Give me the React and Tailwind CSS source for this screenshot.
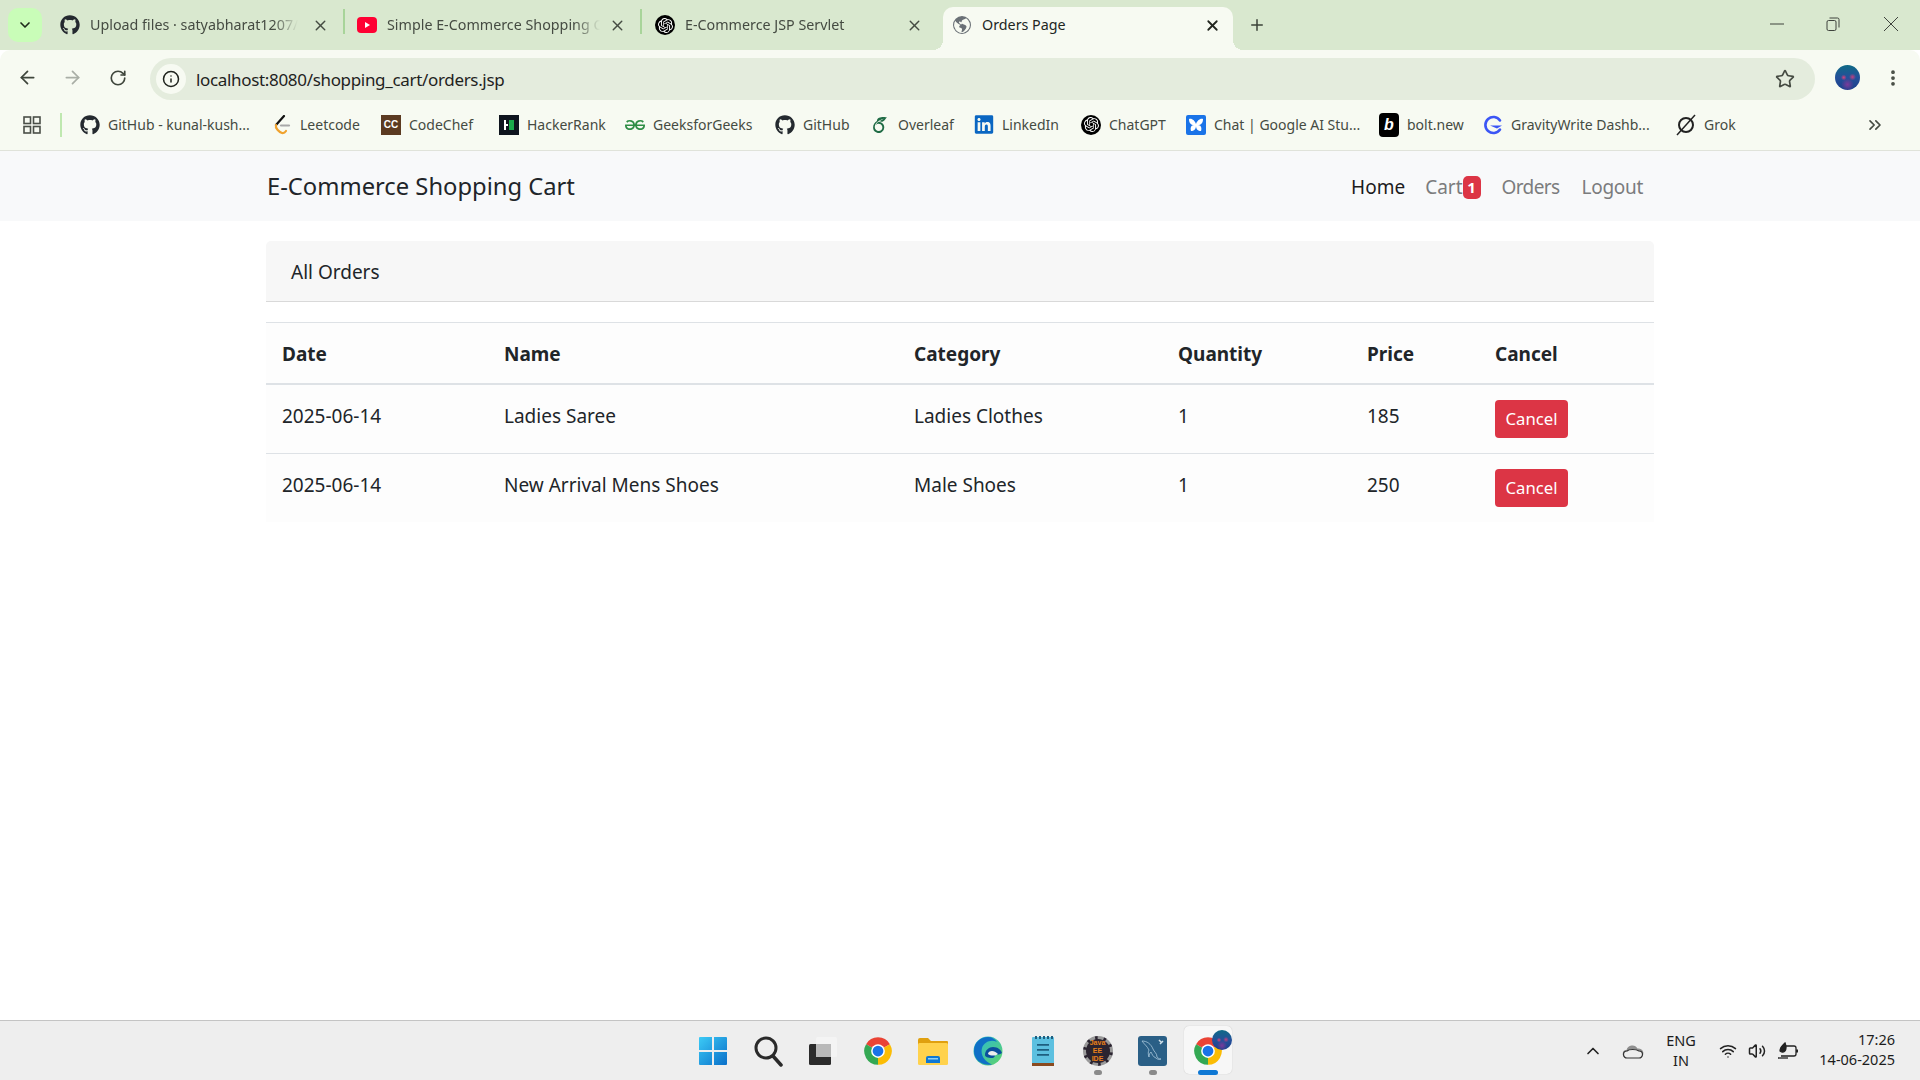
import {
  ArrowLeft,
  ArrowRight,
  ChevronDown,
  ChevronUp,
  ChevronsRight,
  EllipsisVertical,
  Info,
  Plus,
  RotateCw,
  Star,
  Volume2,
  Wifi,
  X,
} from "lucide-react";
import { BsGlobeAmericas } from "react-icons/bs";
import { FaGithub, FaLinkedin } from "react-icons/fa";
import { SiGeeksforgeeks, SiOpenai, SiOverleaf } from "react-icons/si";

const Youtube = () => (
  <svg width="20" height="20" viewBox="0 0 20 20">
    <rect x="0" y="2" width="20" height="16" rx="4" fill="#ff0033" />
    <path d="M8 7l5 3-5 3z" fill="#fff" />
  </svg>
);

const OpenAi = ({ size = 20 }) => (
  <span
    className="flex items-center justify-center rounded-full bg-black text-white"
    style={{ width: size, height: size }}
  >
    <SiOpenai size={size - 5} />
  </span>
);

const Leetcode = () => (
  <svg width="20" height="20" viewBox="0 0 20 20" fill="none">
    <path d="M12 1L4 10" stroke="#111" strokeWidth="2.2" strokeLinecap="round" />
    <path d="M4 10c-1 3 3 7 6 8 1.500.2 3-.5 4-2" stroke="#f0a22e" strokeWidth="2.2" strokeLinecap="round" />
    <path d="M9 10.500h8" stroke="#a8a8a8" strokeWidth="2.2" strokeLinecap="round" />
  </svg>
);

const CodeChef = () => (
  <span className="flex h-[20px] w-[20px] items-center justify-center bg-[#5b3a21] font-['Liberation_Sans',sans-serif] text-[10px] leading-none font-bold text-white">
    CC
  </span>
);

const HackerRank = () => (
  <svg width="20" height="20" viewBox="0 0 20 20">
    <rect width="20" height="20" fill="#0e141e" />
    <path d="M5 5h2v10H5zM7 9h2v2H7z" fill="#fff" />
    <rect x="10" y="5" width="5" height="10" fill="#1ba94c" />
  </svg>
);

const AiStudio = () => (
  <svg width="20" height="24" viewBox="0 0 20 24">
    <rect y="2" width="20" height="20" rx="2" fill="#1a73e8" />
    <path d="M3 6c3-1 6 2 7 5 1-3 4-6 7-5 0 4-2 6-5 6 3 0 4 3 3 6-3 0-5-2-5-5 0 3-2 5-5 5-1-3 0-6 3-6-3 0-5-2-5-6z" fill="#fff" />
  </svg>
);

const Bolt = () => (
  <span className="flex h-[24px] w-[20px] items-center justify-center rounded-[4px] bg-black font-['Liberation_Sans',sans-serif] text-[16px] font-bold text-white italic">
    b
  </span>
);

const Gravity = () => (
  <svg width="20" height="20" viewBox="0 0 20 20" fill="none">
    <path d="M17 5.500A8 8 0 1 0 17 14.500" stroke="#3b55f5" strokeWidth="2.600" strokeLinecap="round" />
    <path d="M7 10.500h12l-5 3z" fill="#3b55f5" />
  </svg>
);

const Grok = () => (
  <svg width="20" height="24" viewBox="0 0 20 24" fill="none">
    <circle cx="10" cy="12" r="7" stroke="#222" strokeWidth="2" />
    <path d="M1 22L19 2" stroke="#222" strokeWidth="1.500" />
  </svg>
);

const AppsGrid = () => (
  <svg width="20" height="20" viewBox="0 0 20 20" fill="none" stroke="#4a4f48" strokeWidth="1.600">
    <rect x="2" y="2" width="6.500" height="6.500" />
    <rect x="11.500" y="2" width="6.500" height="6.500" />
    <rect x="2" y="11.500" width="6.500" height="6.500" />
    <rect x="11.500" y="11.500" width="6.500" height="6.500" />
  </svg>
);

const Restore = () => (
  <svg width="14" height="14" viewBox="0 0 14 14" fill="none" stroke="#3f433d" strokeWidth="1">
    <rect x="1" y="3.500" width="9" height="10" rx="1.500" />
    <path d="M3.500 1h8a1.500 1.500 0 0 1 1.500 1.500v8" />
  </svg>
);

const Minimize = () => (
  <svg width="14" height="14" viewBox="0 0 14 14" stroke="#3f433d" strokeWidth="1">
    <path d="M0 7h14" />
  </svg>
);

const CloseThin = () => (
  <svg width="14" height="14" viewBox="0 0 14 14" stroke="#3f433d" strokeWidth="1">
    <path d="M0 0l14 14M14 0L0 14" />
  </svg>
);

const WindowsLogo = () => (
  <svg width="30" height="30" viewBox="0 0 30 30">
    <defs>
      <linearGradient id="win" x1="0" y1="0" x2="1" y2="1">
        <stop offset="0" stopColor="#3ccbf6" />
        <stop offset="1" stopColor="#0a6fc9" />
      </linearGradient>
    </defs>
    <path d="M1 2a1 1 0 0 1 1-1h12v13H1zM16 1h12a1 1 0 0 1 1 1v12H16zM1 16h13v13H2a1 1 0 0 1-1-1zM16 16h13v12a1 1 0 0 1-1 1H16z" fill="url(#win)" />
  </svg>
);

const SearchGlass = () => (
  <svg width="30" height="32" viewBox="0 0 30 32" fill="none" stroke="#2a2a2a">
    <circle cx="13" cy="13" r="10" strokeWidth="3" />
    <path d="M20 21l8 9" strokeWidth="3.500" strokeLinecap="round" />
  </svg>
);

const TaskView = () => (
  <svg width="30" height="30" viewBox="0 0 30 30">
    <rect x="1" y="8" width="22" height="21" rx="1.500" fill="#2b2b2b" />
    <rect x="8" y="1" width="21" height="20" rx="1.500" fill="#f4f4f4" opacity="0.85" />
    <rect x="8" y="8" width="15" height="13" fill="#b9b9b9" />
  </svg>
);

const Chrome = ({ size = 30 }) => (
  <svg width={size} height={size} viewBox="0 0 24 24">
    <path d="M12 12L2.470 6.500A11 11 0 0 1 21.530 6.500z" fill="#ea4335" />
    <path d="M12 12L21.530 6.500A11 11 0 0 1 12 23z" fill="#fbbc04" />
    <path d="M12 12L12 23A11 11 0 0 1 2.470 6.500z" fill="#34a853" />
    <circle cx="12" cy="12" r="5.500" fill="#fff" />
    <circle cx="12" cy="12" r="4.300" fill="#1a73e8" />
  </svg>
);

const Folder = () => (
  <svg width="32" height="30" viewBox="0 0 32 30">
    <path d="M1 4a2 2 0 0 1 2-2h8l3 3h16a1 1 0 0 1 1 1v3H1z" fill="#e0a00f" />
    <rect x="1" y="7" width="30" height="22" rx="1.500" fill="#ffd24d" />
    <path d="M9 27v-5a2 2 0 0 1 2-2h10a2 2 0 0 1 2 2v5z" fill="#0f78d4" />
    <rect x="11" y="22" width="10" height="1.500" fill="#8fd0f5" />
  </svg>
);

const Edge = () => (
  <svg width="30" height="30" viewBox="0 0 30 30">
    <defs>
      <linearGradient id="edgeA" x1="0" y1="0" x2="1" y2="1">
        <stop offset="0" stopColor="#27b8d8" />
        <stop offset="1" stopColor="#5fd36a" />
      </linearGradient>
    </defs>
    <circle cx="15" cy="15" r="14.500" fill="url(#edgeA)" />
    <path d="M1 15C1 6 8 1 15 1c4 0 7 2 9 5-6-3-13 0-15 6-2 7 3 14 10 16.500C9 30 1 24 1 15z" fill="#0f6fc6" />
    <path d="M12 19c0-5 4-8 8-8 5 0 8 3 9 6-3 2-5 2-8 1 2 2 0 4-2 4-4 0-7-1-7-3z" fill="#0b4f9e" />
    <path d="M15 18c0-2 2-3 4-3s4 1 6 3c-3 2-7 2-10 0z" fill="#eeeeee" />
  </svg>
);

const Notepad = () => (
  <svg width="24" height="32" viewBox="0 0 24 32">
    <rect x="1" y="2" width="22" height="29" rx="1" fill="#5cc0e0" />
    <rect x="1" y="28" width="22" height="3" fill="#8a4a1f" />
    <path d="M6 9h12v1.800H6zM6 14h12v1.800H6zM6 19h12v1.800H6z" fill="#1e5f80" />
    <path d="M4 1h2v3H4zM8 1h2v3H8zM12 1h2v3h-2zM16 1h2v3h-2zM20 1h2v3h-2z" fill="#1e5f80" />
  </svg>
);

const JavaEe = () => (
  <span className="flex h-[30px] w-[30px] items-center justify-center rounded-full border-[3px] border-dashed border-[#9a9a9a] bg-[#2b2430] text-center font-['Liberation_Sans',sans-serif] text-[7px] leading-[8px] font-bold text-[#e8801a]">
    Java EE
    <br />
    IDE
  </span>
);

const MysqlTile = () => (
  <svg width="29" height="30" viewBox="0 0 29 30" fill="none">
    <rect width="29" height="30" rx="3" fill="#2a5f86" />
    <path d="M4 5c5 0 9 3 11 8 1 3 4 4 4 8 1 1 2 2 4 2-2 1-4 0-5-1-3-1-4-4-5-6-1 1-2 2-2 5-1-3-1-5 0-7-2-4-5-6-7-9z" stroke="#a9c8dc" strokeWidth="0.800" />
    <path d="M21 4l3 3M22 8l3-3" stroke="#cfe0ea" strokeWidth="1.500" />
  </svg>
);

const Avatar = ({ className }) => (
  <span
    className={`block rounded-full bg-[radial-gradient(circle_at_35%_50%,#d9417a_0%,transparent_14%),radial-gradient(circle_at_70%_48%,#c2407f_0%,transparent_16%),radial-gradient(circle_at_50%_78%,#7a3a9a_0%,transparent_28%),linear-gradient(180deg,#0e6a86_0%,#24509a_50%,#1b3f8c_100%)] ${className}`}
  />
);

const Cloud = () => (
  <svg width="22" height="16" viewBox="0 0 22 16" fill="none">
    <path d="M5 15a4 4 0 0 1-.5-8 6 6 0 0 1 11-1.500 4.800 4.800 0 0 1 2 9.500z" fill="#8f8f8f" />
    <path d="M5 15a3.500 3.500 0 0 1 0-7c2-2 9-2 12 0a3.500 3.500 0 0 1 0 7z" fill="#eee" stroke="#333" strokeWidth="1.200" />
  </svg>
);

const Battery = () => (
  <svg width="22" height="18" viewBox="0 0 22 18" fill="none" stroke="#222" strokeWidth="1.300">
    <path d="M8 4h9a2 2 0 0 1 2 2v6a2 2 0 0 1-2 2H4" />
    <path d="M20 7.500v3" strokeWidth="2" />
    <path d="M3 9c0-4 3-6 5-8 1 3 2 5 0 8-1 1.500-3 1.500-5 0z" fill="#222" />
    <path d="M1 16h10" />
  </svg>
);

const tabs = [
  {
    icon: <FaGithub size={20} color="#24292f" />,
    title: "Upload files · satyabharat1207/S",
    tabClass: "w-[294px] pl-[10px]",
    titleClass: "w-[208px]",
    closeClass: "ml-[12px]",
    sep: true,
  },
  {
    icon: <Youtube />,
    title: "Simple E-Commerce Shopping C",
    tabClass: "ml-[2px] w-[295px] pl-[11px]",
    titleClass: "w-[213px]",
    closeClass: "ml-[7px]",
    sep: true,
  },
  {
    icon: <OpenAi />,
    title: "E-Commerce JSP Servlet",
    tabClass: "ml-[2px] w-[300px] pl-[12px]",
    titleClass: "w-[219px]",
    closeClass: "",
  },
];

const bookmarks = [
  { icon: <FaGithub size={20} color="#24292f" />, label: "GitHub - kunal-kush...", w: "w-[192px]" },
  { icon: <Leetcode />, label: "Leetcode", w: "w-[109px]" },
  { icon: <CodeChef />, label: "CodeChef", w: "w-[118px]" },
  { icon: <HackerRank />, label: "HackerRank", w: "w-[126px]" },
  { icon: <SiGeeksforgeeks size={20} color="#2f8d46" />, label: "GeeksforGeeks", w: "w-[150px]" },
  { icon: <FaGithub size={20} color="#24292f" />, label: "GitHub", w: "w-[95px]" },
  { icon: <SiOverleaf size={16} color="#1f6b45" />, label: "Overleaf", w: "w-[104px]" },
  { icon: <FaLinkedin size={21} color="#0a66c2" />, label: "LinkedIn", w: "w-[107px]" },
  { icon: <OpenAi />, label: "ChatGPT", w: "w-[105px]" },
  { icon: <AiStudio />, label: "Chat | Google AI Stu...", w: "w-[193px]" },
  { icon: <Bolt />, label: "bolt.new", w: "w-[104px]" },
  { icon: <Gravity />, label: "GravityWrite Dashb...", w: "w-[193px]" },
  { icon: <Grok />, label: "Grok", w: "w-[70px]" },
];

const orders = [
  { date: "2025-06-14", name: "Ladies Saree", category: "Ladies Clothes", qty: 1, price: 185 },
  { date: "2025-06-14", name: "New Arrival Mens Shoes", category: "Male Shoes", qty: 1, price: 250 },
];

function TabStrip() {
  return (
    <div className="flex h-[50px] bg-[#d9e8cf]">
      <button className="ml-[8px] mt-[8px] mr-[8px] flex h-[34px] w-[34px] items-center justify-center rounded-[10px] bg-[#c9fdb8]">
        <ChevronDown size={16} strokeWidth={2.5} color="#1d2a1a" />
      </button>
      {tabs.map((tab) => (
        <div key={tab.title} className={`relative mt-[8px] flex h-[34px] items-center ${tab.tabClass}`}>
          <span className="flex w-[20px] shrink-0 justify-center">{tab.icon}</span>
          <span className={`ml-[10px] overflow-hidden text-[14.300px] whitespace-nowrap text-[#454b42] [mask-image:linear-gradient(to_right,black_88%,transparent)] ${tab.titleClass}`}>
            {tab.title}
          </span>
          <span className={`flex w-[20px] shrink-0 justify-center ${tab.closeClass}`}>
            <X size={17} strokeWidth={2} color="#454b42" />
          </span>
          {tab.sep && <span className="absolute top-[1px] -right-[1px] h-[25px] w-[2px] bg-[#a8d49a]" />}
        </div>
      ))}
      <div className="relative flex h-[43px] w-[290px] items-center self-end rounded-t-[10px] bg-[#f7faf2] pb-[7px] pl-[9px] before:absolute before:bottom-0 before:-left-[10px] before:h-[10px] before:w-[10px] before:bg-[radial-gradient(circle_at_0_0,transparent_10px,#f7faf2_10px)] after:absolute after:-right-[10px] after:bottom-0 after:h-[10px] after:w-[10px] after:bg-[radial-gradient(circle_at_100%_0,transparent_10px,#f7faf2_10px)]">
        <span className="flex w-[20px] shrink-0 justify-center">
          <BsGlobeAmericas size={18} color="#6a7076" />
        </span>
        <span className="ml-[10px] w-[220px] text-[14.300px] whitespace-nowrap text-[#22261f]">Orders Page</span>
        <span className="flex w-[20px] shrink-0 justify-center">
          <X size={17} strokeWidth={2.5} color="#22261f" />
        </span>
      </div>
      <span className="ml-[14px] flex w-[20px] items-center justify-center">
        <Plus size={18} strokeWidth={2} color="#3b4238" />
      </span>
      <div className="ml-auto flex h-[48px] items-center pr-[22px]">
        <span className="w-[14px]"><Minimize /></span>
        <span className="ml-[42px] w-[14px]"><Restore /></span>
        <span className="ml-[44px] w-[14px]"><CloseThin /></span>
      </div>
    </div>
  );
}

function Toolbar() {
  return (
    <div className="flex h-[50px] items-end rounded-t-[10px] bg-[#f7faf2] pl-[4px]">
      <div className="flex h-[42px] items-center pb-[3px]">
        <span className="flex w-[46px] justify-center"><ArrowLeft size={21} color="#3f463c" /></span>
        <span className="flex w-[45px] justify-center"><ArrowRight size={21} color="#a9aea6" /></span>
        <span className="flex w-[46px] justify-center"><RotateCw size={18} strokeWidth={2.2} color="#3f463c" /></span>
      </div>
      <div className="ml-[9px] flex h-[42px] w-[1665px] items-center rounded-full bg-[#e4ecdd] pl-[6px]">
        <span className="flex h-[30px] w-[30px] items-center justify-center rounded-full bg-[#f7faf2]">
          <Info size={18} color="#1f231d" />
        </span>
        <span className="ml-[10px] pt-[1px] text-[17px] tracking-[-0.33px] text-[#1f231d]">localhost:8080/shopping_cart/orders.jsp</span>
        <span className="ml-auto mr-[20px]"><Star size={20} strokeWidth={2} color="#454b42" /></span>
      </div>
      <div className="flex h-[42px] items-center pb-[3px]">
        <Avatar className="ml-[20px] h-[25px] w-[25px]" />
        <span className="ml-[23px]"><EllipsisVertical size={20} strokeWidth={2.5} color="#454b42" /></span>
      </div>
    </div>
  );
}

function BookmarksBar() {
  return (
    <div className="flex h-[51px] items-center border-b border-[#e0e3da] bg-[#f7faf2] pb-[1px] pl-[22px]">
      <AppsGrid />
      <span className="mr-[18px] ml-[18px] h-[24px] w-[2px] bg-[#bfe8b0]" />
      {bookmarks.map((b) => (
        <div key={b.label} className={`flex items-center ${b.w}`}>
          <span className="flex w-[20px] shrink-0 justify-center">{b.icon}</span>
          <span className="ml-[8px] text-[14px] whitespace-nowrap text-[#454b42]">{b.label}</span>
        </div>
      ))}
      <span className="ml-[119px]"><ChevronsRight size={20} strokeWidth={2} color="#454b42" /></span>
    </div>
  );
}

function Navbar() {
  return (
    <nav className="flex h-[70px] items-center justify-center bg-[#f8f9fa]">
      <div className="flex w-[1388px] items-center pt-[2px] pr-[11px] pl-[1px]">
        <a className="text-[23.750px] text-[#212529]">E-Commerce Shopping Cart</a>
        <div className="ml-auto flex items-center text-[19px] text-[#7b7c7d]">
          <a className="text-[#1c1c1c]">Home</a>
          <a className="ml-[20px] flex items-center">
            Cart
            <span className="mt-[1px] flex h-[23px] w-[18px] items-center justify-center rounded-[5px] bg-[#dc3545] text-[15px] font-bold text-white">1</span>
          </a>
          <a className="ml-[21px] tracking-[-0.6px]">Orders</a>
          <a className="ml-[22px] tracking-[-0.3px]">Logout</a>
        </div>
      </div>
    </nav>
  );
}

function OrdersTable() {
  return (
    <main className="mx-auto w-[1388px] flex-1 pt-[20px] text-[19px] leading-[30px] text-[#212529]">
      <div className="flex h-[61px] items-center rounded-t-[5px] border-b border-[#d9d9d9] bg-[#f7f7f7] pt-[2px] pl-[25px]">
        All Orders
      </div>
      <table className="mt-[20px] w-full table-fixed border-t border-[#dee2e6] bg-[#fdfdfd] text-left">
        <thead>
          <tr className="border-b-2 border-[#dee2e6]">
            <th className="w-[223px] pt-[16px] pr-[15px] pb-[14px] pl-[16px] font-bold">Date</th>
            <th className="w-[410px] px-[15px] pt-[16px] pb-[14px] font-bold">Name</th>
            <th className="w-[264px] px-[15px] pt-[16px] pb-[14px] font-bold">Category</th>
            <th className="w-[189px] px-[15px] pt-[16px] pb-[14px] font-bold">Quantity</th>
            <th className="w-[128px] px-[15px] pt-[16px] pb-[14px] font-bold">Price</th>
            <th className="px-[15px] pt-[16px] pb-[14px] font-bold">Cancel</th>
          </tr>
        </thead>
        <tbody>
          {orders.map((o, i) => (
            <tr key={o.name} className={i === 0 ? "border-b border-[#dee2e6]" : ""}>
              <td className="pt-[16px] pr-[15px] pb-[14px] pl-[16px] align-top">{o.date}</td>
              <td className="px-[15px] pt-[16px] pb-[14px] align-top">{o.name}</td>
              <td className="px-[15px] pt-[16px] pb-[14px] align-top">{o.category}</td>
              <td className="px-[15px] pt-[16px] pb-[14px] align-top">{o.qty}</td>
              <td className="px-[15px] pt-[16px] pb-[14px] align-top">{o.price}</td>
              <td className="p-[15px] align-top">
                <button className="block h-[38px] w-[73px] rounded-[4px] bg-[#dc3545] text-[16.700px] text-white">Cancel</button>
              </td>
            </tr>
          ))}
        </tbody>
      </table>
    </main>
  );
}

function Taskbar() {
  return (
    <footer className="flex h-[60px] items-center border-t border-[#c4c4c4] bg-[#eeeeee] pl-[685px] text-[14.500px] text-[#1c1c1c]">
      <span className="flex w-[55px] justify-center"><WindowsLogo /></span>
      <span className="flex w-[55px] justify-center"><SearchGlass /></span>
      <span className="flex w-[55px] justify-center"><TaskView /></span>
      <span className="flex w-[55px] justify-center"><Chrome /></span>
      <span className="flex w-[55px] justify-center"><Folder /></span>
      <span className="flex w-[55px] justify-center"><Edge /></span>
      <span className="flex w-[55px] justify-center"><Notepad /></span>
      <span className="relative flex w-[55px] justify-center">
        <JavaEe />
        <span className="absolute -bottom-[9px] h-[5px] w-[8px] rounded-full bg-[#8a8a8a]" />
      </span>
      <span className="relative flex w-[55px] justify-center">
        <MysqlTile />
        <span className="absolute -bottom-[9px] h-[5px] w-[8px] rounded-full bg-[#8a8a8a]" />
      </span>
      <span className="relative flex w-[55px] justify-center">
        <span className="absolute -top-[10px] h-[48px] w-[48px] rounded-[5px] bg-[#f7f7f7] shadow-[0_0_1px_#bbb]" />
        <span className="relative flex"><Chrome /></span>
        <Avatar className="absolute -top-[6px] right-[3px] h-[20px] w-[20px]" />
        <span className="absolute -bottom-[9px] h-[5px] w-[20px] rounded-full bg-[#0f78d4]" />
      </span>
      <div className="ml-[338px] flex items-center">
        <span className="flex w-[40px] justify-center"><ChevronUp size={20} strokeWidth={2} color="#222" /></span>
        <span className="flex w-[40px] justify-center"><Cloud /></span>
        <span className="flex w-[56px] flex-col items-center pb-[2px] leading-[20px]">
          <span>ENG</span>
          <span>IN</span>
        </span>
        <span className="ml-[5px] flex w-[28px] justify-center"><Wifi size={18} color="#222" /></span>
        <span className="ml-[1px] flex w-[28px] justify-center"><Volume2 size={18} color="#222" /></span>
        <span className="ml-[3px] flex w-[28px] justify-center"><Battery /></span>
        <span className="flex w-[93px] flex-col items-end pb-[3px] leading-[20px]">
          <span>17:26</span>
          <span>14-06-2025</span>
        </span>
      </div>
    </footer>
  );
}

export default function App() {
  return (
    <div className="flex h-[1080px] w-[1920px] flex-col overflow-hidden bg-white font-['Noto_Sans',sans-serif]">
      <TabStrip />
      <Toolbar />
      <BookmarksBar />
      <Navbar />
      <OrdersTable />
      <Taskbar />
    </div>
  );
}
